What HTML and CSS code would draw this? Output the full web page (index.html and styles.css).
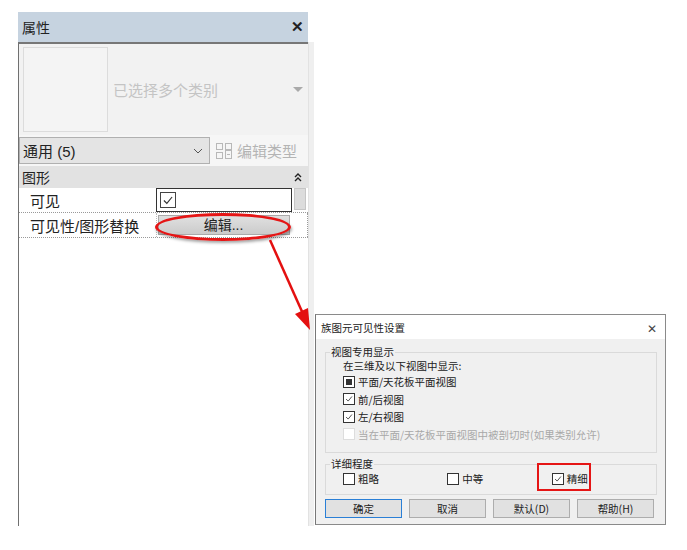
FILE: index.html
```html
<!DOCTYPE html>
<html lang="zh-CN">
<head>
    <meta charset="utf-8">
    <title>属性 - 族图元可见性设置</title>
    <link rel="stylesheet" href="styles.css">
</head>
<body>
<div class="canvas">
    <!-- 属性面板 -->
    <div class="panel">
        <div class="ptitle"><span>属性</span><span class="pclose">✕</span></div>
        <div class="pwrap">
            <div class="pmain">
                <div class="preview">
                    <div class="thumb"></div>
                    <span class="multi">已选择多个类别</span>
                    <span class="drop"></span>
                </div>
                <div class="typerow">
                    <div class="typesel">
                        <span>通用 (5)</span>
                        <svg width="10" height="6" viewBox="0 0 10 6"><path d="M1 1 L5 5 L9 1" fill="none" stroke="#555" stroke-width="1"/></svg>
                    </div>
                    <div class="edittype">
                        <svg width="18" height="18" viewBox="0 0 18 18">
                            <rect x="1.5" y="1.5" width="6" height="6" fill="none" stroke="#b8b8b8"/>
                            <rect x="10.5" y="1.5" width="6" height="6" fill="none" stroke="#b8b8b8"/>
                            <rect x="1.5" y="10.5" width="6" height="6" fill="none" stroke="#b8b8b8"/>
                            <rect x="10.5" y="8.5" width="6" height="8" fill="none" stroke="#b8b8b8"/>
                            <line x1="12" y1="12.5" x2="15" y2="12.5" stroke="#b8b8b8"/>
                        </svg>
                        <span>编辑类型</span>
                    </div>
                </div>
                <div class="cathead">
                    <span>图形</span>
                    <svg width="8" height="9" viewBox="0 0 8 9"><path d="M1 4 L4 1 L7 4 M1 8 L4 5 L7 8" fill="none" stroke="#222" stroke-width="1.4"/></svg>
                </div>
                <div class="prow">
                    <div class="plabel">可见</div>
                    <div class="pval pbox">
                        <span class="cb"><svg width="12" height="12" viewBox="0 0 12 12"><path d="M2.5 6 L5 8.5 L9.5 3" fill="none" stroke="#333" stroke-width="1"/></svg></span>
                    </div>
                    <div class="pscroll"><div class="sthumb"></div></div>
                </div>
                <div class="prow dotted">
                    <div class="plabel">可见性/图形替换</div>
                    <div class="pval"><div class="editbtn">编辑...</div></div>
                    <div class="pscroll edge"></div>
                </div>
            </div>
            <div class="pstrip"></div>
        </div>
    </div>

    <div class="ring"></div>
    <svg class="arrow" width="60" height="100" viewBox="0 0 60 100">
        <line x1="4" y1="2" x2="38" y2="78" stroke="#e41010" stroke-width="2.5"/>
        <polygon points="44,92 29,76 42,70" fill="#e41010"/>
    </svg>

    <!-- 对话框 -->
    <div class="dialog">
        <div class="dtitle"><span>族图元可见性设置</span><span class="dclose">✕</span></div>
        <div class="dbody">
            <fieldset class="grp">
                <legend>视图专用显示</legend>
                <div class="gline">在三维及以下视图中显示:</div>
                <div class="ck"><span class="cb part"><i></i></span>平面/天花板平面视图</div>
                <div class="ck"><span class="cb"><svg width="12" height="12" viewBox="0 0 12 12"><path d="M2.5 6 L5 8.5 L9.5 3" fill="none" stroke="#333" stroke-width="1"/></svg></span>前/后视图</div>
                <div class="ck"><span class="cb"><svg width="12" height="12" viewBox="0 0 12 12"><path d="M2.5 6 L5 8.5 L9.5 3" fill="none" stroke="#333" stroke-width="1"/></svg></span>左/右视图</div>
                <div class="ck off"><span class="cb"></span>当在平面/天花板平面视图中被剖切时(如果类别允许)</div>
            </fieldset>
            <fieldset class="grp detail">
                <legend>详细程度</legend>
                <div class="ck"><span class="cb"></span>粗略</div>
                <div class="ck"><span class="cb"></span>中等</div>
                <div class="ck mark"><span class="cb"><svg width="12" height="12" viewBox="0 0 12 12"><path d="M2.5 6 L5 8.5 L9.5 3" fill="none" stroke="#333" stroke-width="1"/></svg></span>精细</div>
            </fieldset>
            <div class="btns">
                <div class="btn primary">确定</div>
                <div class="btn">取消</div>
                <div class="btn">默认(D)</div>
                <div class="btn">帮助(H)</div>
            </div>
        </div>
    </div>
</div>
</body>
</html>
```

FILE: styles.css
```css
/* 基本 */
body {
    margin: 0;
    background: #fff;
    font-family: "Liberation Sans", "Noto Sans CJK SC", sans-serif;
    color: #222;
}

.canvas {
    position: relative;
    width: 687px;
    height: 550px;
}

/* 属性面板 */
.panel {
    position: absolute;
    left: 18px;
    top: 12px;
    width: 296px;
    height: 514px;
    display: flex;
    flex-direction: column;
}

.ptitle {
    height: 30px;
    width: 290px;
    background: #c6d3e0;
    display: flex;
    align-items: center;
    justify-content: space-between;
    padding: 0 4px 0 4px;
    box-sizing: border-box;
    font-size: 14px;
}

.pclose {
    font-weight: bold;
    font-size: 15px;
}

.pwrap {
    flex: 1;
    display: flex;
}

.pmain {
    width: 290px;
    border-left: 1px solid #707070;
    border-top: 2px solid #777;
    box-sizing: border-box;
}

.pstrip {
    width: 6px;
    background: #efefef;
    border-left: 1px solid #e2e2e2;
}

.preview {
    height: 91px;
    background: #f2f2f2;
    display: flex;
    align-items: center;
    padding-left: 4px;
    position: relative;
}

.thumb {
    width: 83px;
    height: 83px;
    border: 1px solid #dcdcdc;
    background: #f4f4f4;
}

.multi {
    margin-left: 5px;
    font-size: 15px;
    color: #c4c4c4;
}

.drop {
    position: absolute;
    right: 5px;
    top: 43px;
    border-left: 5px solid transparent;
    border-right: 5px solid transparent;
    border-top: 5px solid #aaa;
}

.typerow {
    height: 31px;
    display: flex;
    align-items: center;
    background: #f6f6f6;
}

.typesel {
    width: 191px;
    height: 27px;
    box-sizing: border-box;
    border: 1px solid #b0b0b0;
    background: #e4e4e4;
    display: flex;
    align-items: center;
    justify-content: space-between;
    padding: 0 6px 0 3px;
    font-size: 15px;
}

.edittype {
    display: flex;
    align-items: center;
    gap: 4px;
    margin-left: 5px;
    font-size: 15px;
    color: #b4b4b4;
}

.cathead {
    height: 22px;
    background: #e2e2e2;
    display: flex;
    align-items: center;
    justify-content: space-between;
    padding: 0 6px 0 3px;
    font-size: 14px;
}

.prow {
    display: flex;
    height: 24px;
    font-size: 15px;
}

.prow.dotted {
    border-top: 1px dotted #999;
    border-bottom: 1px dotted #999;
}

.plabel {
    width: 137px;
    padding-left: 11px;
    box-sizing: border-box;
    display: flex;
    align-items: center;
}

.pval {
    width: 136px;
    display: flex;
    align-items: center;
    border-left: 1px dotted #bbb;
}

.pbox {
    border: 1px solid #333;
    background: #fff;
    box-sizing: border-box;
    padding-left: 3px;
}

.pscroll {
    width: 15px;
    display: flex;
    justify-content: center;
}

.pscroll.edge {
    border-right: 1px dotted #999;
}

.sthumb {
    width: 12px;
    height: 22px;
    background: #dcdcdc;
    border: 1px solid #c6c6c6;
    box-sizing: border-box;
}

.editbtn {
    width: 132px;
    height: 20px;
    margin-left: 1px;
    background: linear-gradient(#e0e0e0, #cbcbcb);
    border: 1px solid #aaa;
    box-sizing: border-box;
    font-size: 14px;
    text-align: center;
    line-height: 18px;
}

/* 复选框 */
.cb {
    width: 12px;
    height: 12px;
    border: 1px solid #333;
    background: #fff;
    box-sizing: border-box;
    display: inline-flex;
    align-items: center;
    justify-content: center;
    flex: none;
}

.prow .cb {
    width: 16px;
    height: 16px;
    border-color: #444;
}

.prow .cb svg {
    width: 15px;
    height: 15px;
}

.cb.part i {
    width: 6px;
    height: 6px;
    background: #333;
}

/* 标注 */
.ring {
    position: absolute;
    left: 155px;
    top: 213px;
    width: 130px;
    height: 22px;
    border: 3px solid #e51515;
    border-radius: 50%;
    box-shadow: 1px 2px 3px rgba(0, 0, 0, 0.35);
}

.arrow {
    position: absolute;
    left: 266px;
    top: 238px;
}

/* 对话框 */
.dialog {
    position: absolute;
    left: 315px;
    top: 314px;
    width: 351px;
    height: 211px;
    border: 1px solid #8a8a8a;
    border-left-color: #777;
    box-sizing: border-box;
    background: #f0f0f0;
    font-size: 10.5px;
    font-family: "Noto Sans CJK SC", sans-serif;
    display: flex;
    flex-direction: column;
}

.dtitle {
    height: 24px;
    background: #fff;
    display: flex;
    align-items: center;
    justify-content: space-between;
    padding: 0 8px 0 5px;
}

.dclose {
    font-size: 12px;
    color: #444;
}

.dbody {
    flex: 1;
    padding: 7px 8px 0 9px;
    display: flex;
    flex-direction: column;
}

.grp {
    margin: 0;
    border: 1px solid #dadada;
    padding: 0 0 9px 17px;
    min-width: 0;
}

.grp legend {
    padding: 0 1px;
    margin-left: -13px;
    line-height: 12px;
}

.gline {
    height: 15px;
    line-height: 15px;
}

.ck {
    display: flex;
    align-items: center;
    gap: 3px;
    height: 17.5px;
}

.ck.off {
    color: #a8a8a8;
}

.ck.off .cb {
    border-color: #ddd;
}

.detail {
    margin-top: 5px;
    flex-direction: row;
    display: flex;
    padding-bottom: 6px;
}

.detail .ck {
    width: 105px;
    position: relative;
}

.detail .ck.mark::after {
    content: "";
    position: absolute;
    left: -15px;
    top: -7px;
    width: 50px;
    height: 24px;
    border: 2px solid #e51515;
}

.btns {
    display: flex;
    gap: 7px;
    margin-top: 4px;
}

.btn {
    width: 77px;
    height: 19px;
    line-height: 17px;
    box-sizing: border-box;
    border: 1px solid #adadad;
    background: #e1e1e1;
    text-align: center;
}

.btn.primary {
    border: 1px solid #2a7fd6;
}
```
